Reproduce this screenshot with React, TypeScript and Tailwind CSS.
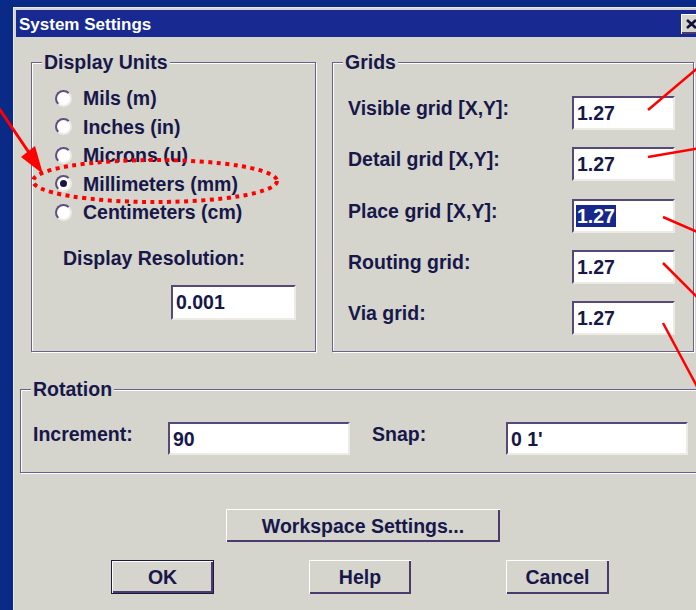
import React from "react";

const INK = "text-[#17174a]";

function Radio({ label, checked }: { label: string; checked?: boolean }) {
  return (
    <div className="flex h-[28.5px] items-center">
      <span className="flex h-[17px] w-[17px] items-center justify-center rounded-full border-2 border-b-[#ecebe6] border-l-[#5e4f80] border-r-[#ecebe6] border-t-[#5e4f80] bg-white">
        {checked && <span className="h-[7px] w-[7px] rounded-full bg-[#17174a]" />}
      </span>
      <span className="ml-[11px] leading-[24px]">{label}</span>
    </div>
  );
}

function Field({
  value,
  className,
  selected,
}: {
  value: string;
  className: string;
  selected?: boolean;
}) {
  return (
    <div
      className={`flex items-center border-2 border-b-[#ecebe6] border-l-[#564879] border-r-[#ecebe6] border-t-[#564879] bg-white pl-[2px] ${className}`}
    >
      {selected ? (
        <span className="bg-[#16288c] px-[1px] leading-[22px] text-white">{value}</span>
      ) : (
        <span className="pl-[1px] leading-[22px]">{value}</span>
      )}
    </div>
  );
}

function Group({
  title,
  className,
  children,
}: {
  title: string;
  className: string;
  children: React.ReactNode;
}) {
  return (
    <div
      className={`relative border border-[#6b5f8c] shadow-[1px_1px_0_#ffffff,inset_1px_1px_0_#ffffff] ${className}`}
    >
      <span className="absolute left-[10px] top-[-13px] bg-[#d5d4cd] px-[2px] leading-[24px]">
        {title}
      </span>
      {children}
    </div>
  );
}

function Button({
  label,
  className,
  isDefault,
}: {
  label: string;
  className: string;
  isDefault?: boolean;
}) {
  const frame = isDefault
    ? "border border-[#1d1840] shadow-[inset_1px_1px_0_#ffffff,inset_-2px_-2px_0_#4a3a6e]"
    : "shadow-[inset_1px_1px_0_#ffffff,inset_-2px_-2px_0_#4a3a6e]";
  return (
    <div className={`flex items-center justify-center bg-[#d5d4cd] leading-[24px] ${frame} ${className}`}>
      {label}
    </div>
  );
}

function Callouts() {
  return (
    <svg
      className="pointer-events-none absolute left-0 top-0"
      width="696"
      height="610"
      viewBox="0 0 696 610"
    >
      {/* pointer to the selected unit */}
      <line x1="-4" y1="104" x2="34" y2="160" stroke="#ff0000" strokeWidth="3" />
      <polygon points="21,157 35,146 43,174" fill="#ff0000" />
      <ellipse
        cx="155"
        cy="181"
        rx="122"
        ry="21"
        fill="none"
        stroke="#ff0000"
        strokeWidth="4"
        strokeDasharray="4 4.5"
      />
      {/* leaders to the grid fields */}
      <line x1="648" y1="110" x2="700" y2="66" stroke="#ff0000" strokeWidth="2.5" />
      <line x1="648" y1="157" x2="700" y2="148" stroke="#ff0000" strokeWidth="2.5" />
      <line x1="663" y1="217" x2="700" y2="233" stroke="#ff0000" strokeWidth="2.5" />
      <line x1="663" y1="263" x2="700" y2="300" stroke="#ff0000" strokeWidth="2.5" />
      <line x1="663" y1="323" x2="700" y2="392" stroke="#ff0000" strokeWidth="2.5" />
    </svg>
  );
}

export default function App() {
  return (
    <div
      className={`relative h-[610px] w-[696px] overflow-hidden bg-[#0a2a88] text-[19.5px] font-bold ${INK}`}
      style={{ fontFamily: '"Liberation Sans", Arial, sans-serif' }}
    >
      <div className="ml-[13px] mt-[7px] h-[640px] w-[720px] border-l border-t border-[#e9e9e9] bg-[#d5d4cd] pl-[2px] pt-[2px]">
        {/* title bar */}
        <div className="flex h-[27px] w-[690px] items-center justify-between bg-[#182a92] pl-[3px]">
          <span className="pt-[2px] text-[17px] leading-[20px] text-white">System Settings</span>
          <div className="mr-[4px] flex h-[20px] w-[21px] items-center justify-center bg-[#d5d4cd] shadow-[inset_1px_1px_0_#ffffff,inset_-2px_-2px_0_#4a3a6e]">
            <svg width="11" height="10" viewBox="0 0 11 10">
              <path d="M1 1 L10 9 M10 1 L1 9" stroke="#10103a" strokeWidth="2.6" />
            </svg>
          </div>
        </div>

        {/* top groups */}
        <div className="mt-[25px] flex">
          <Group title="Display Units" className="ml-[15px] h-[290px] w-[285px]">
            <div className="pl-[23px] pt-[21px]">
              <Radio label="Mils (m)" />
              <Radio label="Inches (in)" />
              <Radio label="Microns (u)" />
              <Radio label="Millimeters (mm)" checked />
              <Radio label="Centimeters (cm)" />
            </div>
            <div className="mt-[19px] pl-[31px] leading-[24px]">Display Resolution:</div>
            <div className="mt-[15px] pl-[139px]">
              <Field value="0.001" className="h-[35px] w-[125px]" />
            </div>
          </Group>

          <Group title="Grids" className="ml-[16px] h-[290px] w-[362px]">
            <div className="pl-[15px] pt-[33px]">
              {[
                ["Visible grid [X,Y]:", false],
                ["Detail grid [X,Y]:", false],
                ["Place grid [X,Y]:", true],
                ["Routing grid:", false],
                ["Via grid:", false],
              ].map(([label, sel]) => (
                <div key={label as string} className="flex h-[51.25px] items-start">
                  <span className="w-[224px] leading-[24px]">{label as string}</span>
                  <Field value="1.27" selected={sel as boolean} className="h-[34px] w-[103px]" />
                </div>
              ))}
            </div>
          </Group>
        </div>

        {/* rotation */}
        <Group title="Rotation" className="ml-[4px] mt-[37px] h-[84px] w-[700px]">
          <div className="mt-[32px] flex items-start pl-[12px]">
            <span className="w-[135px] leading-[24px]">Increment:</span>
            <Field value="90" className="h-[33px] w-[182px]" />
            <span className="ml-[22px] w-[134px] leading-[24px]">Snap:</span>
            <Field value="0 1'" className="h-[33px] w-[182px]" />
          </div>
        </Group>

        {/* buttons */}
        <Button label="Workspace Settings..." className="ml-[210px] mt-[36px] h-[33px] w-[274px]" />
        <div className="mt-[18px] flex">
          <Button label="OK" isDefault className="ml-[95px] h-[34px] w-[103px]" />
          <Button label="Help" className="ml-[95px] h-[34px] w-[102px]" />
          <Button label="Cancel" className="ml-[95px] h-[34px] w-[103px]" />
        </div>
      </div>
      <Callouts />
    </div>
  );
}
